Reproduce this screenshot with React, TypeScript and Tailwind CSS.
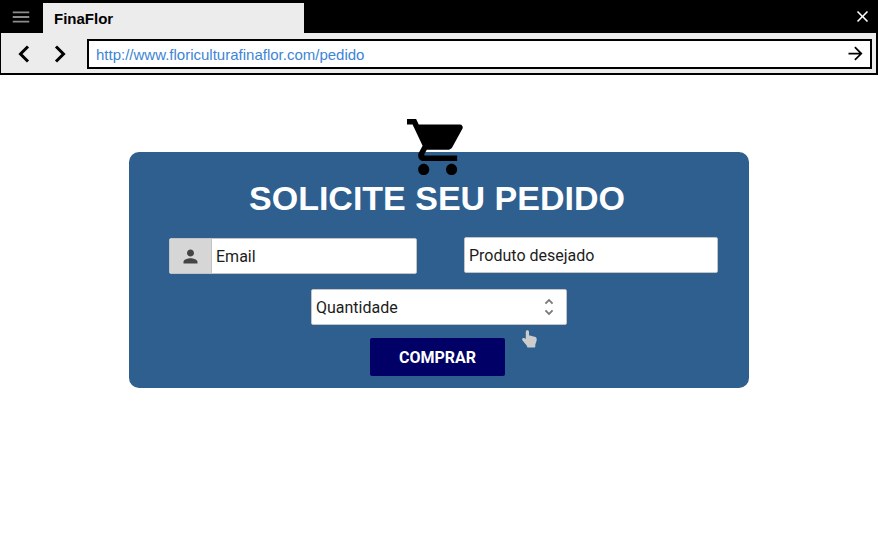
import type { ReactNode } from "react";
import { MdArrowForward, MdClose, MdMenu, MdPerson, MdUnfoldMore } from "react-icons/md";

const fieldBox = "h-9 rounded-[2px] border border-[#c4c4c4] bg-white";
const fieldText =
  "h-full w-full bg-transparent px-1 pt-px font-['Roboto',sans-serif] text-base text-[#1c1c1c] placeholder:text-[#1c1c1c] placeholder:opacity-100 outline-none";

function NavButton({ label, children }: { label: string; children: ReactNode }) {
  return (
    <button type="button" aria-label={label} className="flex size-6 items-center justify-center">
      <svg viewBox="0 0 12 18" className="h-[18px] w-3 fill-none stroke-black stroke-[3]">
        {children}
      </svg>
    </button>
  );
}

function BrowserBar() {
  return (
    <header className="border-b-2 border-black bg-[#ececec]">
      <div className="flex h-[33px] items-center bg-black">
        <button type="button" aria-label="Menu" className="flex w-[42px] justify-center text-[#8c8c8c]">
          <MdMenu size={22} />
        </button>
        <div className="mt-[3px] ml-px flex h-[30px] w-[261px] items-center bg-[#ececec] px-[11px] pt-[2px] text-[15px] font-bold text-black">
          FinaFlor
        </div>
        <button type="button" aria-label="Fechar" className="mr-[6px] ml-auto text-white">
          <MdClose size={19} />
        </button>
      </div>
      <div className="flex h-10 items-center border-r-2 border-l border-black pt-px pr-1 pl-[11px]">
        <nav className="flex gap-3">
          <NavButton label="Voltar">
            <path d="M10 1.5 2.5 9l7.5 7.5" />
          </NavButton>
          <NavButton label="Avançar">
            <path d="m2 1.5 7.5 7.5L2 16.5" />
          </NavButton>
        </nav>
        <form className="ml-[15px] flex h-[30px] flex-1 items-center border-2 border-black bg-white pr-1 pl-[7px]">
          <input
            aria-label="Endereço"
            defaultValue="http://www.floriculturafinaflor.com/pedido"
            className="min-w-0 flex-1 bg-transparent pt-[3px] text-[15px] text-[#3d85d6] outline-none"
          />
          <button type="button" aria-label="Ir" className="text-black">
            <MdArrowForward size={21} />
          </button>
        </form>
      </div>
    </header>
  );
}

function Cart() {
  return (
    <svg viewBox="1 2 20.1 20" preserveAspectRatio="none" className="h-14 w-14 fill-black" aria-hidden="true">
      <path d="M7 18c-1.1 0-1.99.9-1.99 2S5.9 22 7 22s2-.9 2-2-.9-2-2-2zM1 2v2h2l3.6 7.59-1.35 2.45c-.16.28-.25.61-.25.96 0 1.1.9 2 2 2h12v-2H7.42c-.14 0-.25-.11-.25-.25l.03-.12.9-1.63h7.45c.75 0 1.41-.41 1.75-1.03l3.58-6.49A1.003 1.003 0 0 0 20 4H5.21l-.94-2H1zm16 16c-1.1 0-1.99.9-1.99 2s.89 2 1.99 2 2-.9 2-2-.9-2-2-2z" />
    </svg>
  );
}

function Pointer() {
  return (
    <svg viewBox="0 0 15 18" className="absolute top-[178px] left-[393px] h-[18px] w-[15px] fill-[#cccccc]" aria-hidden="true">
      <path d="M3.8 1.8C3.8.7 4.5.2 5.4.2S7 .8 7 1.8v3.5l5.6 1.5c1.4.4 2.1 1.1 2.1 2.4 0 2.3-.8 3.6-1.4 5.2v2.2c0 .6-.3.9-.9.9H6c-.6 0-.9-.3-1-.9-.1-1.3-.9-2-1.8-2.9L.8 10.8C0 9.9 0 9 .5 8.4c.6-.7 1.5-.6 2.2-.1l1.1.8z" />
    </svg>
  );
}

export default function App() {
  return (
    <div className="min-h-screen bg-white font-['Liberation_Sans',Arial,sans-serif]">
      <BrowserBar />
      <main className="mt-[77px] flex justify-center">
        <form className="relative flex w-full max-w-[620px] flex-col items-center rounded-[10px] bg-[#2e5f8f] pb-3">
          <div className="-mt-[33px] mr-2">
            <Cart />
          </div>
          <h1 className="mr-1 text-[34px] leading-[46px] font-bold text-white">SOLICITE SEU PEDIDO</h1>
          <div className="mt-4 flex w-full items-start justify-between pr-[31px] pl-10">
            <label className={`${fieldBox} mt-px flex w-[248px] overflow-hidden`}>
              <span className="flex w-[42px] shrink-0 items-center justify-center border-r border-[#c4c4c4] bg-[#d6d6d6] text-[#444]">
                <MdPerson size={21} />
              </span>
              <input type="email" aria-label="Email" placeholder="Email" className={fieldText} />
            </label>
            <label className={`${fieldBox} w-[254px]`}>
              <input type="text" aria-label="Produto desejado" placeholder="Produto desejado" className={fieldText} />
            </label>
          </div>
          <label className={`${fieldBox} relative mt-[15px] w-64`}>
            <select aria-label="Quantidade" className={`${fieldText} appearance-none`}>
              <option>Quantidade</option>
              <option>1</option>
              <option>2</option>
              <option>3</option>
            </select>
            <MdUnfoldMore size={22} className="pointer-events-none absolute top-[6px] right-[6px] text-[#777]" />
          </label>
          <button
            type="submit"
            className="mt-[13px] mr-[3px] h-[38px] w-[135px] rounded-[2px] bg-[#000066] pt-[2px] font-['Roboto',sans-serif] text-base font-bold text-white"
          >
            COMPRAR
          </button>
          <Pointer />
        </form>
      </main>
    </div>
  );
}
